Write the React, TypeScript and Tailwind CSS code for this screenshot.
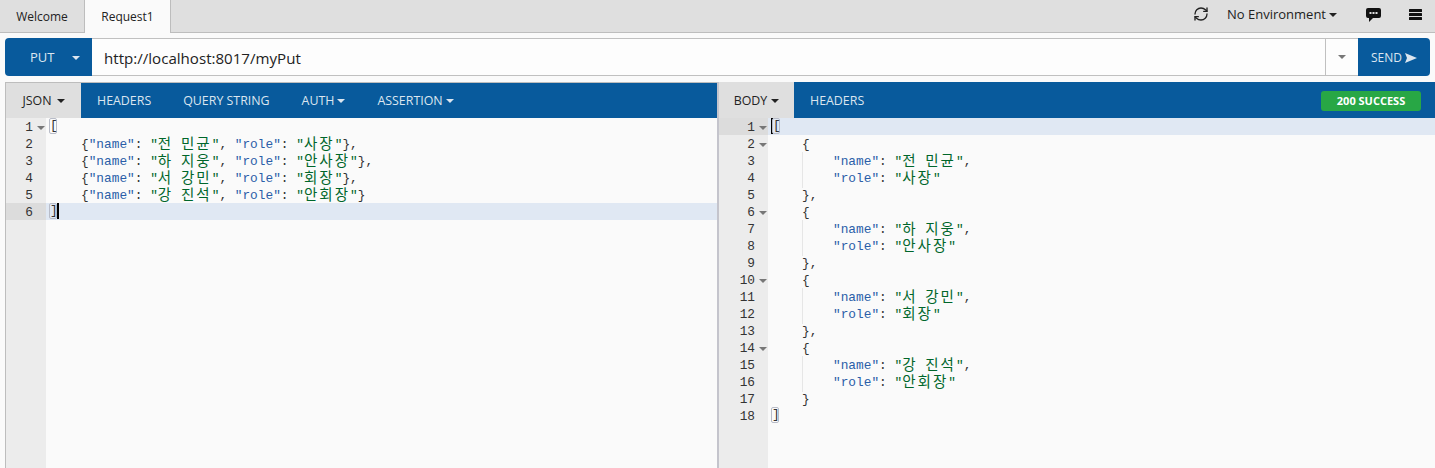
import React from "react";
import { RefreshCw } from "lucide-react";

const ui = "font-['Open_Sans','Noto_Sans',sans-serif]";
const mono = "font-['Liberation_Mono','Noto_Sans_CJK_KR',monospace] text-[12.8px] leading-[19px]";

const Caret = ({ className = "" }: { className?: string }) => (
  <span className={"inline-block w-0 h-0 border-x-[4px] border-x-transparent border-t-[4px] " + className} />
);

// "name": "value" pieces of the json
const Key = ({ children }: { children: React.ReactNode }) => <span className="text-[#2a5ea8]">{children}</span>;
const Pun = ({ children }: { children: React.ReactNode }) => <span className="text-[#333333]">{children}</span>;

// hangul takes two latin cells in the reference
const Str = ({ text }: { text: string }) => (
  <span className="text-[#00662a]">
    "
    {text.split(" ").map((part, i) => (
      <React.Fragment key={part}>
        {i > 0 && " "}
        <span className="text-[14.5px] leading-none tracking-[2.06px] align-[-1px]">{part}</span>
      </React.Fragment>
    ))}
    "
  </span>
);

const Bracket = ({ ch }: { ch: string }) => (
  <span className="inline-block border border-[#b8bcc8] rounded-[2px] h-[16px] w-[8px] leading-[14px] text-[#333333] align-top">{ch}</span>
);

const people = [
  { name: "전 민균", role: "사장" },
  { name: "하 지웅", role: "안사장" },
  { name: "서 강민", role: "회장" },
  { name: "강 진석", role: "안회장" },
];

const Gutter = ({ n, fold, active, width }: { n: number; fold?: boolean; active?: boolean; width: string }) => (
  <div className={`flex items-start justify-end h-[17px] shrink-0 text-[#333333] ${width} ${active ? "bg-[#dcdcdc]" : ""}`}>
    <span>{n}</span>
    <span className="w-[13px] h-[17px] flex justify-center items-center pl-[3px]">{fold && <Caret className="border-t-[#777777] border-x-[3px] border-t-[3px] mt-[2px]" />}</span>
  </div>
);

const Line = ({ n, fold, active, width, indent, children }: { n: number; fold?: boolean; active?: boolean; width: string; indent?: string; children?: React.ReactNode }) => (
  <div className={`flex h-[17px] whitespace-pre ${active ? "bg-[#e0e8f3]" : ""}`}>
    <Gutter n={n} fold={fold} active={active} width={width} />
    <div className={indent ?? "pl-[3px]"}>{children}</div>
  </div>
);

const Tab = ({ children, on }: { children: React.ReactNode; on?: boolean }) => (
  <div className={`flex items-center justify-center text-[12px] text-[#222222] h-[33px] ${on ? "w-[87px] bg-[#fafafa] border-x border-[#bdbdbd]" : "w-[84px]"}`}>
    {children}
  </div>
);

const NavItem = ({ children, caret }: { children: React.ReactNode; caret?: boolean }) => (
  <div className="flex items-center gap-[3px] text-[12.4px] text-[#dce6f0]">
    {children}
    {caret && <Caret className="border-t-[#dce6f0] border-x-[3px] border-t-[3px]" />}
  </div>
);

const LeftPanel = () => (
  <div className="w-[712px] shrink-0 flex flex-col border-t border-l border-[#bdbdbd]">
    <div className="h-[35px] bg-[#085a9c] flex items-center pt-[1px]">
      <div className="w-[75px] h-[35px] -mt-[1px] pt-[1px] bg-[#dfdfdf] flex items-center justify-center gap-[5px] text-[12.4px] text-[#222222]">
        JSON <Caret className="border-t-[#222222] border-x-[3px] border-t-[3px]" />
      </div>
      <div className="flex items-center gap-[32px] pl-[16px]">
        <NavItem>HEADERS</NavItem>
        <NavItem>QUERY STRING</NavItem>
        <NavItem caret>AUTH</NavItem>
        <NavItem caret>ASSERTION</NavItem>
      </div>
    </div>
    <div className={`flex-1 relative bg-[#fafafa] ${mono}`}>
      <div className="absolute left-0 top-0 bottom-0 w-[40px] bg-[#ececec]" />
      <div className="relative">
        <Line n={1} fold width="w-[40px]"><Bracket ch="[" /></Line>
        {people.map((p, i) => (
          <Line key={p.name} n={i + 2} width="w-[40px]" indent="pl-[35px]">
            <Pun>{"{"}</Pun><Key>"name"</Key><Pun>: </Pun><Str text={p.name} /><Pun>, </Pun><Key>"role"</Key><Pun>: </Pun><Str text={p.role} /><Pun>{i < 3 ? "}," : "}"}</Pun>
          </Line>
        ))}
        <Line n={6} active width="w-[40px]"><Bracket ch="]" /><span className="inline-block w-[2px] h-[16px] bg-black align-top" /></Line>
      </div>
    </div>
  </div>
);

const RightPanel = () => {
  let n = 2;
  return (
    <div className="flex-1 flex flex-col border-l-[2px] border-[#c4c4cc]">
      <div className="h-[36px] bg-[#085a9c] flex items-center pr-[14px]">
        <div className="w-[75px] h-full pt-[2px] bg-[#dfdfdf] flex items-center justify-center gap-[4px] text-[12.4px] text-[#222222]">
          BODY <Caret className="border-t-[#222222] border-x-[3px] border-t-[3px]" />
        </div>
        <div className="pl-[16px] pt-[2px] flex-1"><NavItem>HEADERS</NavItem></div>
        <div className="w-[100px] h-[20px] mt-[2px] rounded-[3px] bg-[#28a745] flex items-center justify-center text-[11px] font-bold text-white">200 SUCCESS</div>
      </div>
      <div className={`flex-1 relative bg-[#fafafa] ${mono}`}>
        <div className="absolute left-0 top-0 bottom-0 w-[49px] bg-[#ececec]" />
        <div className="relative">
          <Line n={1} fold active width="w-[49px]">
            <span className="inline-block w-[2px] h-[16px] bg-black align-top -mr-[1px]" /><Bracket ch="[" />
          </Line>
          {people.map((p, i) => {
            const start = n;
            n += 4;
            return (
              <React.Fragment key={p.name}>
                <Line n={start} fold width="w-[49px]" indent="pl-[34px]"><Pun>{"{"}</Pun></Line>
                <Line n={start + 1} width="w-[49px]" indent="pl-[34px]">
                  <div className="border-l border-[#e6e6e6] pl-[30px]"><Key>"name"</Key><Pun>: </Pun><Str text={p.name} /><Pun>,</Pun></div>
                </Line>
                <Line n={start + 2} width="w-[49px]" indent="pl-[34px]">
                  <div className="border-l border-[#e6e6e6] pl-[30px]"><Key>"role"</Key><Pun>: </Pun><Str text={p.role} /></div>
                </Line>
                <Line n={start + 3} width="w-[49px]" indent="pl-[34px]"><Pun>{i < 3 ? "}," : "}"}</Pun></Line>
              </React.Fragment>
            );
          })}
          <Line n={18} width="w-[49px]"><Bracket ch="]" /></Line>
        </div>
      </div>
    </div>
  );
};

export default function App() {
  return (
    <div className={`w-[1435px] h-[468px] overflow-hidden flex flex-col bg-[#fafafa] ${ui}`}>
      <div className="h-[33px] shrink-0 bg-[#dfdfdf] border-b border-[#bdbdbd] flex items-start">
        <Tab>Welcome</Tab>
        <Tab on>Request1</Tab>
        <div className="ml-auto h-full flex items-center text-[#222222] pr-[13px] pb-[4px]">
          <RefreshCw className="w-[16px] h-[16px] text-[#222222]" />
          <div className="flex items-center gap-[3px] text-[13px] ml-[18px] mt-[2px]">
            No Environment <Caret className="border-t-[#222222]" />
          </div>
          <svg className="ml-[29px] mt-[1px]" width="15" height="14" viewBox="0 0 15 14">
            <path d="M2 0 H13 Q15 0 15 2 V8 Q15 10 13 10 H7 L3 14 V10 H2 Q0 10 0 8 V2 Q0 0 2 0 Z" fill="#111111" />
            <rect x="3.5" y="4" width="2" height="2" fill="#dfdfdf" />
            <rect x="6.5" y="4" width="2" height="2" fill="#dfdfdf" />
            <rect x="9.5" y="4" width="2" height="2" fill="#dfdfdf" />
          </svg>
          <svg className="ml-[28px]" width="13" height="11" viewBox="0 0 13 11">
            <rect x="0" y="0" width="13" height="3" rx="0.5" fill="#111111" />
            <rect x="0" y="4" width="13" height="3" rx="0.5" fill="#111111" />
            <rect x="0" y="8" width="13" height="3" rx="0.5" fill="#111111" />
          </svg>
        </div>
      </div>

      <div className="h-[38px] shrink-0 mt-[5px] mx-[5px] flex">
        <div className="w-[87px] pt-[1px] bg-[#085a9c] rounded-l-[4px] flex items-center text-[13px] text-[#dce6f0] pl-[25px]">
          PUT <Caret className="ml-[18px] border-t-[#dce6f0]" />
        </div>
        <div className="flex-1 flex items-center border-y border-[#c0c0c0] bg-[#fdfdfd] pl-[12px] pt-[3px] text-[15.1px] text-[#222222]">
          http://localhost:8017/myPut
        </div>
        <div className="w-[33px] flex items-center justify-center border border-[#c0c0c0] border-r-0 bg-[#fdfdfd]">
          <Caret className="border-t-[#777777]" />
        </div>
        <div className="w-[72px] pt-[1px] bg-[#085a9c] rounded-r-[4px] flex items-center justify-center gap-[3px] text-[12px] text-[#dce6f0]">
          SEND
          <svg width="12" height="10" viewBox="0 0 12 10"><path d="M0 0 L12 5 L0 10 L2 5 Z" fill="#dce6f0" /></svg>
        </div>
      </div>

      <div className="flex-1 min-h-0 mt-[6px] pl-[5px] flex">
        <LeftPanel />
        <RightPanel />
      </div>
    </div>
  );
}
